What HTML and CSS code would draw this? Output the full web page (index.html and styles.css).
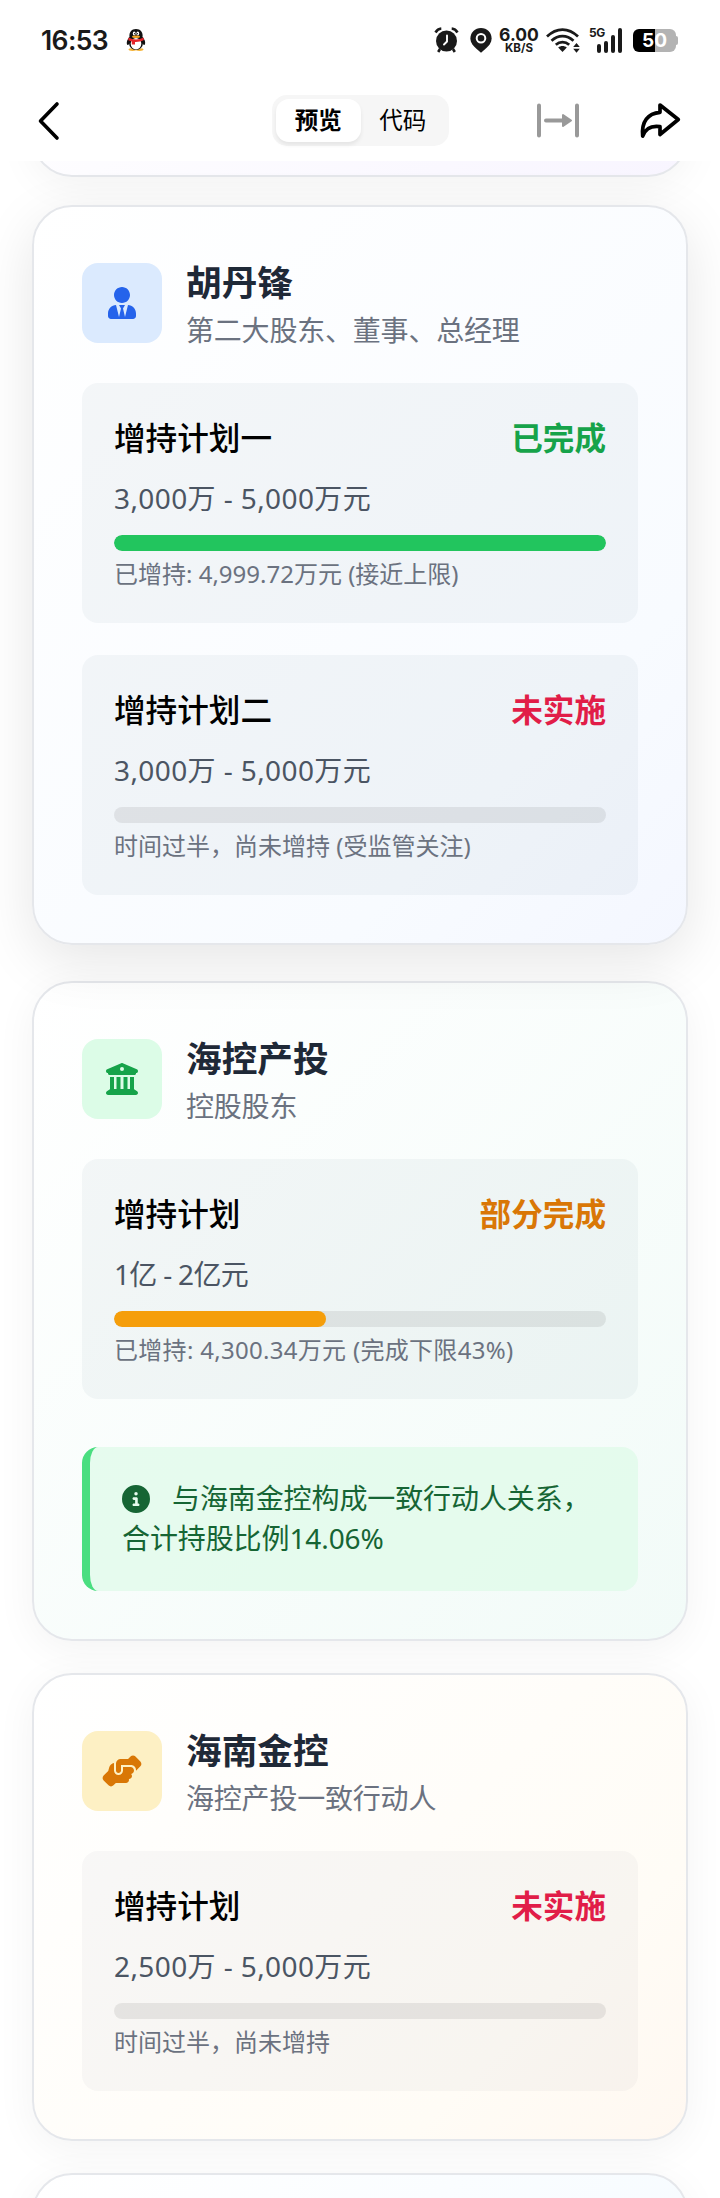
FILE: index.html
```html
<!DOCTYPE html>
<html lang="zh-CN">
<head>
    <meta charset="UTF-8">
    <meta name="viewport" content="width=device-width, initial-scale=1.0">
    <title>增持计划</title>
    <link rel="stylesheet" href="styles.css">
</head>
<body>
<header class="top">
    <div class="status-bar">
        <span class="time">16:53</span>
        <svg class="penguin" width="20" height="24" viewBox="0 0 20 24">
            <ellipse cx="6.5" cy="21.6" rx="4" ry="1.4" fill="#f5b335"/>
            <ellipse cx="13.5" cy="21.6" rx="4" ry="1.4" fill="#f5b335"/>
            <path d="M3.5 9C.5 12 .2 16 1.6 17c1 .3 2-2 2-2l12.800 0s1 2.300 2 2c1.400-1 1.100-5-1.900-8z" fill="#111"/>
            <ellipse cx="10" cy="15" rx="7" ry="7" fill="#111"/>
            <ellipse cx="10" cy="15.800" rx="5.300" ry="5.700" fill="#fff"/>
            <path d="M3.500 9.500C2.800 4 5.500 1 10 1s7.200 3 6.500 8.500z" fill="#111"/>
            <ellipse cx="8.200" cy="5.500" rx="1.400" ry="1.900" fill="#fff"/>
            <ellipse cx="11.800" cy="5.500" rx="1.400" ry="1.900" fill="#fff"/>
            <circle cx="8.600" cy="5.700" r=".6" fill="#111"/>
            <circle cx="11.400" cy="5.700" r=".6" fill="#111"/>
            <ellipse cx="10" cy="8.700" rx="4" ry="1.200" fill="#f5a623"/>
            <path d="M2.500 9.500c4.500 2.500 10.500 2.500 15 0l.4 2.600c-3 1.600-6 2-8.900 1.900v2.500H5.800v-3l-3.500-1.300z" fill="#e5252a"/>
        </svg>
        <div class="status-icons">
            <svg class="alarm" width="25" height="26" viewBox="0 0 25 26">
                <circle cx="12.500" cy="14" r="10.500" fill="#1a1a1a"/>
                <path d="M1.500 5.500C3 2.800 4.800 1.700 7.300 1.500M23.500 5.500C22 2.800 20.200 1.700 17.700 1.500M6 22l-1.800 3M19 22l1.800 3" fill="none" stroke="#1a1a1a" stroke-width="2.600"/>
                <path d="M13 8.500v6l-3 3" fill="none" stroke="#fff" stroke-width="1.900" stroke-linecap="round"/>
            </svg>
            <svg class="pin" width="22" height="25" viewBox="0 0 22 25">
                <path d="M11 0C5 0 .4 4.500.4 10.300c0 4.500 2.800 7.500 6.600 11l4 3.500 4-3.500c3.800-3.500 6.600-6.500 6.600-11C21.600 4.500 17 0 11 0z" fill="#1a1a1a"/>
                <circle cx="11" cy="10.300" r="4.300" fill="none" stroke="#fff" stroke-width="2"/>
            </svg>
            <div class="speed"><b>6.00</b><span>KB/S</span></div>
            <svg class="wifi" width="35" height="25" viewBox="0 0 35 25">
                <g fill="none" stroke="#1a1a1a" stroke-width="2.700">
                    <path d="M1 8.500C10.500-.8 22.500-.8 32 8.500"/>
                    <path d="M5.500 12.800c6.700-6.200 15.300-6.200 22 0"/>
                    <path d="M9.800 16.800c4-3.600 9.400-3.600 13.400 0"/>
                </g>
                <path d="M16.500 24l-4.300-4.600c2.500-2 6.100-2 8.600 0z" fill="#1a1a1a"/>
                <path d="M30.500 15l3.300 4h-6.600zM30.500 24.800l3.300-4h-6.600z" fill="#1a1a1a"/>
            </svg>
            <div class="signal">
                <span>5G</span>
                <i class="bar-1"></i><i class="bar-2"></i><i class="bar-3"></i><i class="bar-4"></i>
            </div>
            <div class="battery">50</div>
        </div>
    </div>
    <div class="nav-bar">
        <svg class="back" width="24" height="40" viewBox="0 0 24 40">
            <path d="M21 3L4.500 20 21 37" fill="none" stroke="#000" stroke-width="3.600" stroke-linecap="round" stroke-linejoin="round"/>
        </svg>
        <div class="tabs">
            <button class="tab active">预览</button>
            <button class="tab">代码</button>
        </div>
        <svg class="expand" width="44" height="36" viewBox="0 0 44 36">
            <path d="M3 2.500v30M41 2.500v30M10 17.500h19" fill="none" stroke="#999" stroke-width="4" stroke-linecap="round"/>
            <path d="M27 12v11l8-5.500z" fill="#999" stroke="#999" stroke-width="2" stroke-linejoin="round"/>
        </svg>
        <svg class="share" width="42" height="38" viewBox="0 0 42 38">
            <path d="M21 3L39.300 17.500 21 32.500V24.700C12.500 23.500 6.500 26.500 3.700 34 2.200 19.500 9 11.300 21 10.300z" fill="none" stroke="#000" stroke-width="3.700" stroke-linejoin="round"/>
        </svg>
    </div>
</header>

<main class="content">
    <section class="card purple peek-top"></section>

    <section class="card blue raised">
        <div class="holder">
            <div class="avatar">
                <svg width="28" height="32" viewBox="0 0 448 512"><path fill="currentColor" d="M224 256c70.700 0 128-57.300 128-128S294.700 0 224 0 96 57.300 96 128s57.300 128 128 128zm95.800 32.600L272 480l-32-136 32-56h-96l32 56-32 136-47.800-191.400C56.900 292 0 350.300 0 422.400V464c0 26.500 21.500 48 48 48h352c26.500 0 48-21.500 48-48v-41.600c0-72.100-56.900-130.400-128.200-133.800z"/></svg>
            </div>
            <div>
                <h3>胡丹锋</h3>
                <p>第二大股东、董事、总经理</p>
            </div>
        </div>
        <div class="plan">
            <div class="plan-head"><span>增持计划一</span><strong class="done">已完成</strong></div>
            <div class="amount">3,000万 - 5,000万元</div>
            <div class="progress"><div class="fill-green" style="width: 100%"></div></div>
            <div class="remark">已增持: 4,999.72万元 (接近上限)</div>
        </div>
        <div class="plan">
            <div class="plan-head"><span>增持计划二</span><strong class="pending">未实施</strong></div>
            <div class="amount">3,000万 - 5,000万元</div>
            <div class="progress"></div>
            <div class="remark">时间过半，尚未增持 (受监管关注)</div>
        </div>
    </section>

    <section class="card green">
        <div class="holder">
            <div class="avatar">
                <svg width="32" height="32" viewBox="0 0 512 512"><path fill="currentColor" d="M243.400 2.600l-224 96c-14 6-21.800 21-18.700 35.800S16.800 160 32 160v8c0 13.300 10.700 24 24 24H456c13.300 0 24-10.700 24-24v-8c15.200 0 28.300-10.700 31.300-25.600s-4.800-29.900-18.700-35.800l-224-96c-8-3.400-17.200-3.400-25.200 0zM128 224H64V420.300c-.6 .3-1.200 .7-1.800 1.100l-48 32c-11.700 7.800-17 22.400-12.900 35.900S17.900 512 32 512H480c14.100 0 26.500-9.200 30.600-22.700s-1.100-28.100-12.900-35.900l-48-32c-.6-.4-1.200-.7-1.800-1.100V224H384V416H344V224H280V416H232V224H168V416H128V224zM256 64a32 32 0 1 1 0 64 32 32 0 1 1 0-64z"/></svg>
            </div>
            <div>
                <h3>海控产投</h3>
                <p>控股股东</p>
            </div>
        </div>
        <div class="plan">
            <div class="plan-head"><span>增持计划</span><strong class="partial">部分完成</strong></div>
            <div class="amount tight">1亿 - 2亿元</div>
            <div class="progress"><div class="fill-amber" style="width: 43%"></div></div>
            <div class="remark loose">已增持: 4,300.34万元 (完成下限43%)</div>
        </div>
        <div class="notice">
            <svg width="28" height="28" viewBox="0 0 512 512"><path fill="currentColor" d="M256 512A256 256 0 1 0 256 0a256 256 0 1 0 0 512zM216 336h24V272H216c-13.300 0-24-10.700-24-24s10.700-24 24-24h48c13.300 0 24 10.700 24 24v88h8c13.300 0 24 10.700 24 24s-10.700 24-24 24H216c-13.300 0-24-10.700-24-24s10.700-24 24-24zm40-208a32 32 0 1 1 0 64 32 32 0 1 1 0-64z"/></svg>与海南金控构成一致行动人关系，<br>合计持股比例14.06%
        </div>
    </section>

    <section class="card amber">
        <div class="holder">
            <div class="avatar">
                <svg width="40" height="32" viewBox="0 0 640 512"><path fill="currentColor" d="M544 248v3.300l69.700-69.700c21.900-21.900 21.900-57.300 0-79.200L535.600 24.400c-21.900-21.900-57.300-21.900-79.200 0L416.300 64.500c-2.700-.3-5.500-.5-8.300-.5H296c-37.100 0-67.600 28-71.600 64H224V248c0 22.100 17.900 40 40 40s40-17.900 40-40V176v-16H464c44.200 0 80 35.800 80 80v8zM336 192v56c0 39.800-32.200 72-72 72s-72-32.200-72-72V129.400c-35.900 6.200-65.800 32.300-76 68.200L99.500 255.200 26.300 328.400c-21.900 21.900-21.900 57.300 0 79.200l78.100 78.100c21.900 21.900 57.300 21.900 79.200 0l37.700-37.700c.9 0 1.800 .1 2.700 .1H384c26.500 0 48-21.500 48-48c0-5.600-1-11-2.700-16H432c26.500 0 48-21.500 48-48c0-12.800-5-24.400-13.200-33c25.700-5 45.100-27.600 45.200-54.800v-.4c-.1-30.800-25.100-55.800-56-55.800l-120 0z"/></svg>
            </div>
            <div>
                <h3>海南金控</h3>
                <p>海控产投一致行动人</p>
            </div>
        </div>
        <div class="plan">
            <div class="plan-head"><span>增持计划</span><strong class="pending">未实施</strong></div>
            <div class="amount">2,500万 - 5,000万元</div>
            <div class="progress"></div>
            <div class="remark">时间过半，尚未增持</div>
        </div>
    </section>

    <section class="card sky peek-bottom"></section>
</main>
</body>
</html>
```

FILE: styles.css
```css
* {
    box-sizing: border-box;
}

body {
    margin: 0;
    height: 2198px;
    overflow: hidden;
    display: flex;
    flex-direction: column;
    background: #fff;
    font-family: "Noto Sans", "Noto Sans CJK SC", sans-serif;
    color: #000;
}

svg {
    display: block;
    flex: none;
}

/* phone status bar + viewer toolbar */
.top {
    flex: none;
    height: 161px;
    background: #fff;
}

.status-bar {
    height: 80px;
    padding: 0 44px 0 41px;
    display: flex;
    align-items: center;
    color: #1a1a1a;
}

.time {
    width: 68px;
    font-family: Inter, sans-serif;
    font-size: 26.5px;
    font-weight: 600;
    letter-spacing: -0.6px;
}

.penguin {
    margin-left: 17px;
}

.status-icons {
    margin-left: auto;
    display: flex;
    align-items: center;
    font-family: Inter, sans-serif;
}

.pin {
    margin-left: 11px;
}

.speed {
    width: 40px;
    margin-left: 7px;
    display: flex;
    flex-direction: column;
    align-items: center;
    line-height: 1;
}

.speed b {
    font-size: 17.5px;
    line-height: 15px;
    font-weight: 700;
}

.speed span {
    font-size: 11.5px;
    line-height: 12px;
    font-weight: 700;
}

.wifi {
    margin-left: 7px;
}

.signal {
    position: relative;
    width: 33px;
    height: 25px;
    margin-left: 8px;
    display: flex;
    align-items: flex-end;
    justify-content: flex-end;
    gap: 3px;
}

.signal span {
    position: absolute;
    left: 0;
    top: -1px;
    font-size: 12px;
    line-height: 12px;
    font-weight: 700;
    letter-spacing: -0.5px;
}

.signal i {
    width: 4px;
    border-radius: 2px;
    background: #1a1a1a;
}

.bar-1 {
    height: 9px;
}

.bar-2 {
    height: 12px;
}

.bar-3 {
    height: 18px;
}

.bar-4 {
    height: 25px;
}

.battery {
    position: relative;
    width: 43px;
    height: 23px;
    margin-left: 11px;
    border-radius: 6px;
    background: linear-gradient(90deg, #000 22px, #b3b3b3 22px);
    color: #fff;
    font-size: 19px;
    line-height: 24px;
    font-weight: 700;
    text-align: center;
}

.battery::after {
    content: "";
    position: absolute;
    right: -2px;
    top: 7px;
    width: 2px;
    height: 9px;
    border-radius: 0 2px 2px 0;
    background: #b3b3b3;
}

.nav-bar {
    height: 81px;
    padding: 0 39px 0 36px;
    display: flex;
    align-items: center;
}

.tabs {
    display: flex;
    width: 177px;
    height: 51px;
    margin-left: 212px;
    padding: 4px;
    border-radius: 15px;
    background: #f6f6f6;
}

.tab {
    flex: 1;
    height: 43px;
    padding: 0;
    border: none;
    border-radius: 13px;
    background: none;
    color: #000;
    font-family: inherit;
    font-size: 23.5px;
    line-height: 43px;
}

.tab.active {
    background: #fff;
    font-weight: 700;
    box-shadow: 0 3px 4px rgba(0, 0, 0, 0.07);
}

.expand {
    margin-left: 87px;
}

.share {
    margin-left: auto;
}

/* scrolled page */
.content {
    flex: 1;
    min-height: 0;
    overflow: hidden;
    padding: 0 32px;
}

.card {
    margin-bottom: 32px;
    padding: 48px;
    border: 2px solid #e5e7eb;
    border-radius: 40px;
    background: #fff;
    box-shadow: 0 8px 40px rgba(0, 0, 0, 0.05);
}

.card.blue {
    background: linear-gradient(135deg, #fff, #f8fbff 75%, #f4f7ff);
}

.card.green {
    background: linear-gradient(135deg, #fff, #f2fbf8);
}

.card.amber {
    background: linear-gradient(135deg, #fff, #fffcf6 75%, #fff8f1);
}

.card.purple {
    background: linear-gradient(135deg, #fff, #f8f5ff);
}

.card.sky {
    background: linear-gradient(135deg, #fff, #f5fbff);
}

.card.raised {
    transform: translateY(-4px);
    box-shadow: 0 16px 56px rgba(0, 0, 0, 0.1);
}

/* the top edge lands on a fraction of a pixel after scrolling */
.peek-top {
    height: 200px;
    margin-top: -184.4px;
}

.peek-bottom {
    height: 200px;
}

.holder {
    display: flex;
    align-items: center;
    gap: 24px;
    height: 96px;
    margin-bottom: 32px;
}

.avatar {
    width: 80px;
    height: 80px;
    border-radius: 16px;
    display: flex;
    align-items: center;
    justify-content: center;
}

.blue .avatar {
    background: #dbeafe;
    color: #2563eb;
}

.green .avatar {
    background: #dcfce7;
    color: #16a34a;
}

.amber .avatar {
    background: #fdf0c4;
    color: #d97706;
}

.holder h3 {
    margin: 0;
    font-size: 35.7px;
    line-height: 54px;
    font-weight: 700;
    color: #1f2937;
}

.holder p {
    margin: 0;
    font-size: 28px;
    line-height: 42px;
    letter-spacing: -0.2px;
    color: #6b7280;
}

.plan {
    height: 240px;
    padding: 31px 32px 32px;
    border-radius: 16px;
    background: rgba(130, 148, 172, 0.08);
}

.amber .plan {
    background: rgba(110, 116, 128, 0.05);
}

.plan + .plan {
    margin-top: 32px;
}

.plan-head {
    display: flex;
    justify-content: space-between;
    margin-bottom: 16px;
    font-size: 31.6px;
    line-height: 48px;
    font-weight: 500;
}

.plan-head strong {
    font-weight: 700;
}

.done {
    color: #16a34a;
}

.pending {
    color: #e11d48;
}

.partial {
    color: #d97706;
}

.amount {
    font-size: 28px;
    line-height: 40px;
    letter-spacing: 0.4px;
    color: #4b5563;
}

.amount.tight {
    letter-spacing: -0.7px;
}

.progress {
    height: 16px;
    margin-top: 17px;
    border-radius: 8px;
    overflow: hidden;
    background: rgba(0, 0, 0, 0.075);
}

.progress div {
    height: 100%;
    border-radius: 8px;
}

.fill-green {
    background: #22c55e;
}

.fill-amber {
    background: #f59e0b;
}

.remark {
    margin-top: 7px;
    font-size: 24px;
    line-height: 32px;
    color: #6b7280;
}

.remark.loose {
    letter-spacing: 0.3px;
}

.notice {
    height: 144px;
    margin-top: 48px;
    padding: 31px 32px;
    border-left: 8px solid #4ade80;
    border-radius: 16px;
    background: rgba(220, 250, 231, 0.65);
    font-size: 28px;
    line-height: 40px;
    letter-spacing: -0.1px;
    color: #166534;
    white-space: nowrap;
}

.notice svg {
    display: inline-block;
    margin-right: 22px;
    vertical-align: -4px;
}
```
